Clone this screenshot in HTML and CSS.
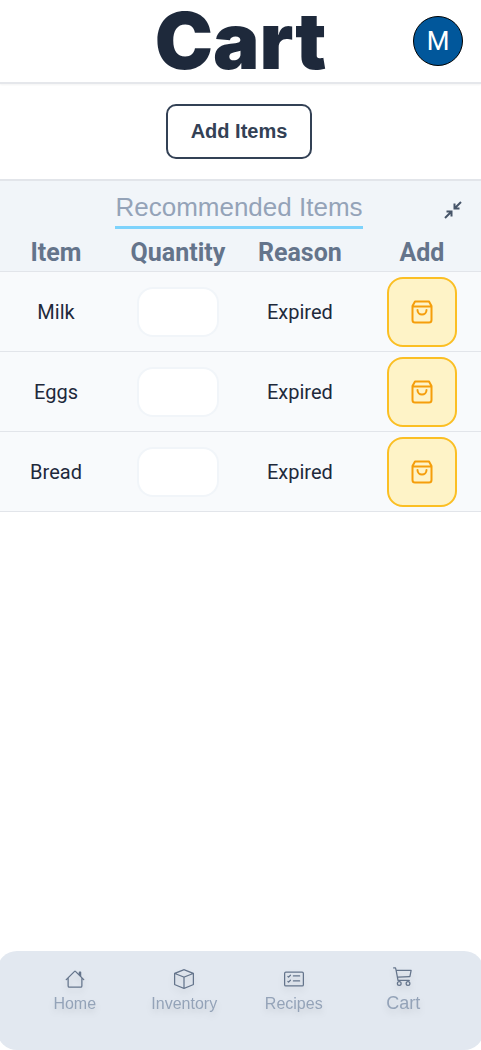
FILE: index.html
```html
<!DOCTYPE html>
<html lang="en">
<head>
<meta charset="utf-8">
<meta name="viewport" content="width=device-width, initial-scale=1">
<title>Cart</title>
<link rel="stylesheet" href="styles.css">
</head>
<body>
<svg class="sprite" aria-hidden="true">
  <symbol id="bag" viewBox="0 0 24 24">
    <path d="M2.500 6 5 1.500h14L21.500 6v14a2.500 2.500 0 0 1-2.500 2.500H5A2.500 2.500 0 0 1 2.500 20ZM2.500 6.500h19M7.500 10a4.500 4.500 0 0 0 9 0"/>
  </symbol>
</svg>
<header class="header">
  <h1 class="title">Cart</h1>
  <button class="avatar" type="button" aria-label="Account">M</button>
</header>
<main class="main">
  <div class="actions"><button class="add-items" type="button">Add Items</button></div>
  <section class="recommended">
    <div class="section-head">
      <h2 class="section-title">Recommended Items</h2>
      <button class="collapse" type="button" aria-label="Collapse">
        <svg viewBox="0 0 18 18"><path d="M1 17 7.500 10.500M2.500 10.500h5V15.500M17 1l-6.500 6.500M10.500 2.500v5H15.500"/></svg>
      </button>
    </div>
    <table class="items">
      <colgroup><col class="col-item"><col class="col-quantity"><col class="col-reason"><col class="col-add"></colgroup>
      <thead><tr><th>Item</th><th>Quantity</th><th>Reason</th><th>Add</th></tr></thead>
      <tbody>
        <tr><td>Milk</td><td><input class="quantity" type="text" aria-label="Milk quantity"></td><td>Expired</td><td><button class="add" type="button" aria-label="Add Milk"><svg><use href="#bag"/></svg></button></td></tr>
        <tr><td>Eggs</td><td><input class="quantity" type="text" aria-label="Eggs quantity"></td><td>Expired</td><td><button class="add" type="button" aria-label="Add Eggs"><svg><use href="#bag"/></svg></button></td></tr>
        <tr><td>Bread</td><td><input class="quantity" type="text" aria-label="Bread quantity"></td><td>Expired</td><td><button class="add" type="button" aria-label="Add Bread"><svg><use href="#bag"/></svg></button></td></tr>
      </tbody>
    </table>
  </section>
</main>
<nav class="nav">
  <a class="nav-link" href="#home">
    <svg viewBox="0 0 16 16"><path d="M8.707 1.500a1 1 0 0 0-1.414 0L.646 8.146a.5.5 0 0 0 .708.708L2 8.207V13.500A1.500 1.500 0 0 0 3.500 15h9a1.500 1.500 0 0 0 1.500-1.500V8.207l.646.647a.5.5 0 0 0 .708-.708L13 5.793V2.500a.5.5 0 0 0-.5-.5h-1a.5.5 0 0 0-.5.5v1.293zM13 7.207V13.500a.5.5 0 0 1-.5.5h-9a.5.5 0 0 1-.5-.5V7.207l5-5z"/></svg>
    <span>Home</span>
  </a>
  <a class="nav-link" href="#inventory">
    <svg viewBox="0 0 16 16"><path d="M8.186 1.113a.5.5 0 0 0-.372 0L1.846 3.500 8 5.961 14.154 3.500zM15 4.239l-6.500 2.600v7.922l6.500-2.600V4.240zM7.500 14.762V6.838L1 4.239v7.923zM7.443.184a1.500 1.500 0 0 1 1.114 0l7.129 2.852A.5.5 0 0 1 16 3.500v8.662a1 1 0 0 1-.629.928l-7.185 2.874a.5.5 0 0 1-.372 0L.63 13.090a1 1 0 0 1-.63-.928V3.500a.5.5 0 0 1 .314-.464z"/></svg>
    <span>Inventory</span>
  </a>
  <a class="nav-link" href="#recipes">
    <svg viewBox="0 0 16 16"><path d="M14.500 3a.5.5 0 0 1 .5.5v9a.5.5 0 0 1-.5.5h-13a.5.5 0 0 1-.5-.5v-9a.5.5 0 0 1 .5-.5zm-13-1A1.500 1.500 0 0 0 0 3.500v9A1.500 1.500 0 0 0 1.500 14h13a1.500 1.500 0 0 0 1.500-1.500v-9A1.500 1.500 0 0 0 14.500 2z"/><path d="M7 5.500a.5.5 0 0 1 .5-.5h5a.5.5 0 0 1 0 1h-5a.5.5 0 0 1-.5-.5m-1.496-.854a.5.5 0 0 1 0 .708l-1.500 1.500a.5.5 0 0 1-.708 0l-.5-.5a.5.5 0 1 1 .708-.708l.146.147 1.146-1.147a.5.5 0 0 1 .708 0M7 9.500a.5.5 0 0 1 .5-.5h5a.5.5 0 0 1 0 1h-5a.5.5 0 0 1-.5-.5m-1.496-.854a.5.5 0 0 1 0 .708l-1.500 1.500a.5.5 0 0 1-.708 0l-.5-.5a.5.5 0 0 1 .708-.708l.146.147 1.146-1.147a.5.5 0 0 1 .708 0"/></svg>
    <span>Recipes</span>
  </a>
  <a class="nav-link current" href="#cart" aria-current="page">
    <svg viewBox="0 0 16 16"><path d="M0 1.500A.5.5 0 0 1 .5 1H2a.5.5 0 0 1 .485.379L2.890 3H14.500a.5.5 0 0 1 .49.598l-1 5a.5.5 0 0 1-.465.401l-9.397.472L4.415 11H13a.5.5 0 0 1 0 1H4a.5.5 0 0 1-.491-.408L2.010 3.607 1.610 2H.5a.5.5 0 0 1-.5-.5M3.102 4l.84 4.479 9.144-.459L13.890 4zM5 12a2 2 0 1 0 0 4 2 2 0 0 0 0-4m7 0a2 2 0 1 0 0 4 2 2 0 0 0 0-4m-7 1a1 1 0 1 1 0 2 1 1 0 0 1 0-2m7 0a1 1 0 1 1 0 2 1 1 0 0 1 0-2"/></svg>
    <span>Cart</span>
  </a>
</nav>
</body>
</html>
```
FILE: styles.css
```css
* { box-sizing: border-box; }
body {
  margin: 0;
  min-height: 100vh;
  display: flex;
  flex-direction: column;
  overflow-x: hidden;
  background: #fff;
  color: #1e293b;
  font-family: Roboto, sans-serif;
  font-size: 20px;
}
button { padding: 0; font: inherit; cursor: pointer; }
.sprite { display: none; }
.header {
  display: grid;
  grid-template-columns: 1fr auto 1fr;
  align-items: center;
  height: 84px;
  padding: 0 18px;
  border-bottom: 2px solid #e5e7eb;
  box-shadow: 0 1px 2px rgb(0 0 0 / 5%);
}
.title {
  grid-column: 2;
  margin: 0;
  font-family: Inter, "Liberation Sans", sans-serif;
  font-size: 78px;
  font-weight: 900;
  line-height: 82px;
}
.avatar {
  justify-self: end;
  width: 50px;
  height: 50px;
  border: 1px solid #000;
  border-radius: 50%;
  background: #01579b;
  color: #fff;
  font-size: 26px;
}
.actions {
  display: flex;
  justify-content: center;
  padding: 20px 3px 20px 0;
}
.add-items {
  height: 55px;
  padding: 0 23px;
  border: 2px solid #334155;
  border-radius: 10px;
  background: #fff;
  color: #334155;
  font-family: "Liberation Sans", Arial, sans-serif;
  font-size: 20px;
  font-weight: 700;
}
.recommended {
  border-top: 2px solid #e2e5ea;
  background: #f1f5f9;
}
.section-head {
  display: grid;
  grid-template-columns: 1fr auto 1fr;
  align-items: center;
  height: 54px;
  padding: 3px 19px 0 16px;
}
.section-title {
  grid-column: 2;
  margin: 0;
  padding-bottom: 3px;
  border-bottom: 3px solid #7dd3fc;
  color: #94a3b8;
  font-family: "Liberation Sans", Arial, sans-serif;
  font-size: 26px;
  font-weight: 400;
  line-height: 32px;
}
.collapse {
  justify-self: end;
  display: flex;
  border: 0;
  background: none;
}
.collapse svg {
  width: 18px;
  height: 18px;
  fill: none;
  stroke: #475569;
  stroke-width: 2;
}
.items {
  width: 100%;
  table-layout: fixed;
  border-collapse: separate;
  border-spacing: 0;
  text-align: center;
}
.col-item, .col-reason { width: 23.3%; }
.col-quantity { width: 27.4%; }
.col-add { width: 26%; }
.items th {
  height: 37px;
  padding: 0;
  border-bottom: 1px solid #e2e5ea;
  color: #64748b;
  font-size: 25px;
  font-weight: 700;
  line-height: 30px;
}
.items td {
  height: 80px;
  padding: 0;
  border-bottom: 1px solid #e2e5ea;
  background: #f8fafc;
}
.items th:last-child,
.items td:last-child { padding-left: 7px; }
.quantity {
  display: block;
  width: 82px;
  height: 50px;
  margin: 0 auto;
  padding: 0 12px;
  border: 2px solid #f1f5f9;
  border-radius: 16px;
  background: #fff;
  font: inherit;
}
.add {
  display: flex;
  align-items: center;
  justify-content: center;
  width: 70px;
  height: 70px;
  margin: 0 auto;
  border: 2px solid #fbbf24;
  border-radius: 16px;
  background: #fef3c7;
}
.add svg {
  width: 24px;
  height: 24px;
  fill: none;
  stroke: #f59e0b;
  stroke-width: 2;
  stroke-linecap: round;
  stroke-linejoin: round;
}
.nav {
  display: grid;
  grid-template-columns: repeat(4, 1fr);
  height: 99px;
  margin: auto -3px 0;
  padding: 18px 26px 0 23px;
  border-radius: 20px;
  background: #e2e8f0;
}
.nav-link {
  display: flex;
  flex-direction: column;
  align-items: center;
  gap: 5px;
  height: 52px;
  color: #94a3b8;
  font-family: "Liberation Sans", Arial, sans-serif;
  font-size: 16px;
  line-height: 20px;
  text-decoration: none;
  filter: drop-shadow(0 4px 3px rgb(0 0 0 / 10%));
}
.nav-link svg {
  width: 20px;
  height: 20px;
  fill: #64748b;
}
.current {
  gap: 7px;
  margin-top: -3px;
  font-size: 18px;
}
```
